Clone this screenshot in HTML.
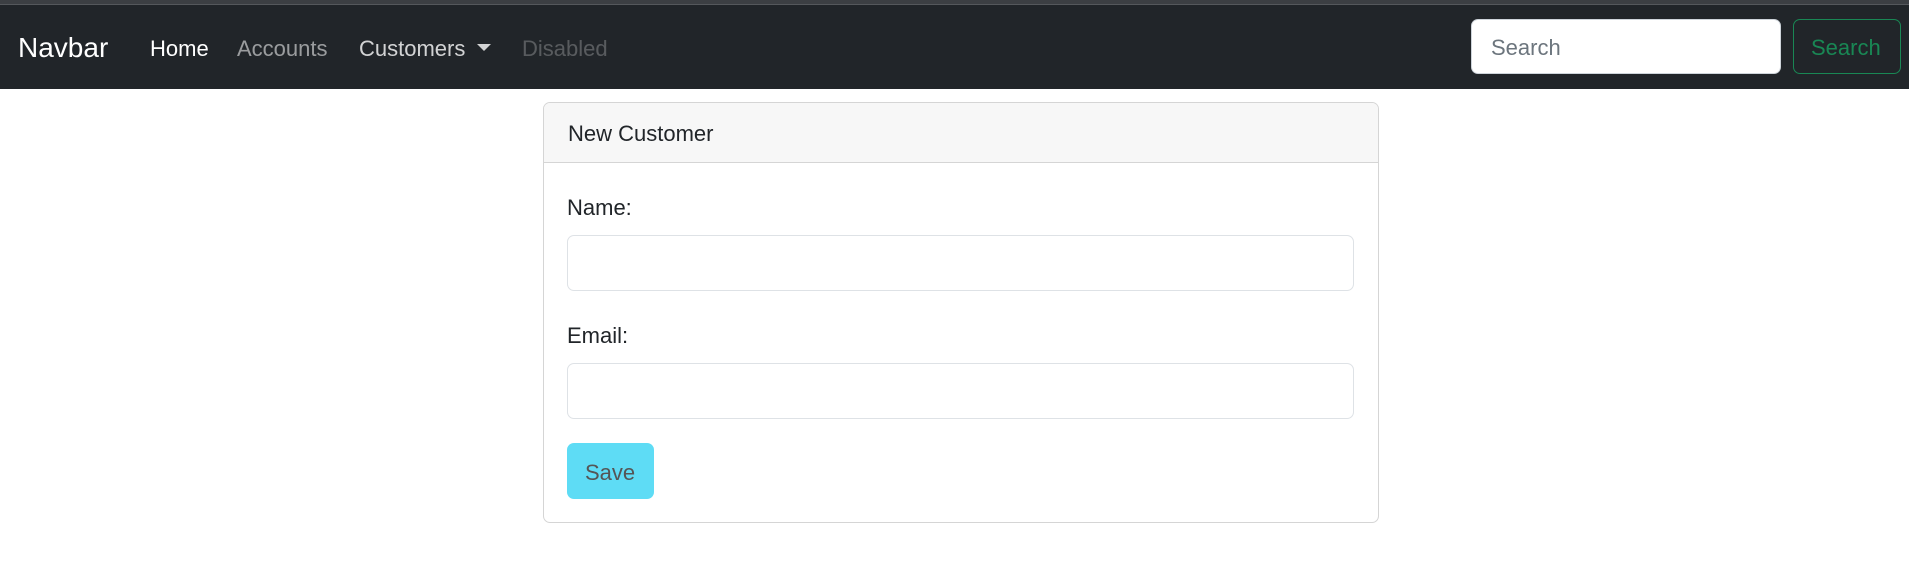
<!DOCTYPE html>
<html><head><meta charset="utf-8"><style>
*{box-sizing:border-box;margin:0;padding:0}
body{width:1909px;height:588px;background:#fff;font-family:"Liberation Sans",sans-serif;font-size:22px;color:#212529;position:relative;overflow:hidden}
.top{position:absolute;left:0;top:0;width:1909px;height:5px;background:#3c3f43;border-bottom:1px solid #55585c}
.nav{position:absolute;left:0;top:5px;width:1909px;height:84px;background:#212529}
.t{position:absolute;white-space:nowrap;line-height:1}
.brand{left:18px;top:29px;font-size:28px;color:#fff}
.n{top:33px;font-size:22px}
.caret{display:inline-block;width:0;height:0;border-left:7px solid transparent;border-right:7px solid transparent;border-top:7px solid rgba(255,255,255,.8);vertical-align:5px;margin-left:12px}
.sin{position:absolute;left:1471px;top:19px;width:310px;height:55px;background:#fff;border-radius:7px;border:1px solid #ced4da}
.sbtn{position:absolute;left:1793px;top:19px;width:108px;height:55px;border:1px solid #198754;border-radius:7px;color:#198754}
.card{position:absolute;left:543px;top:102px;width:836px;height:421px;border:1px solid #d5d5d5;border-radius:7px;overflow:hidden}
.ch{height:60px;background:#f7f7f7;border-bottom:1px solid #d5d5d5}
.inp{position:absolute;left:567px;width:787px;height:56px;border:1px solid #dee2e6;border-radius:7px}
.save{position:absolute;left:567px;top:443px;width:87px;height:56px;background:#5edcf5;border-radius:7px}
</style></head><body>
<div class="top"></div>
<div class="nav">
<div class="t brand">Navbar</div>
<div class="t n" style="left:150px;color:#fff">Home</div>
<div class="t n" style="left:237px;color:rgba(255,255,255,.55)">Accounts</div>
<div class="t n" style="left:359px;color:rgba(255,255,255,.8)">Customers<span class="caret"></span></div>
<div class="t n" style="left:522px;color:rgba(255,255,255,.25)">Disabled</div>
</div>
<div class="sin"><div class="t" style="left:19px;top:17px;color:#6c757d">Search</div></div>
<div class="sbtn"><div class="t" style="left:17px;top:17px">Search</div></div>
<div class="card"><div class="ch"><div class="t" style="left:24px;top:20px">New Customer</div></div></div>
<div class="t" style="left:567px;top:197px">Name:</div>
<div class="inp" style="top:235px"></div>
<div class="t" style="left:567px;top:325px">Email:</div>
<div class="inp" style="top:363px"></div>
<div class="save"><div class="t" style="left:18px;top:19px;color:#555">Save</div></div>
</body></html>
